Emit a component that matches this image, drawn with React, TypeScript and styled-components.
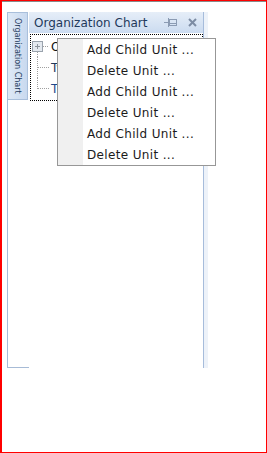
import React from 'react';
import styled, {createGlobalStyle} from 'styled-components';

const GlobalStyle = createGlobalStyle`
  html, body {
    margin: 0;
    padding: 0;
    background: #fff;
  }
  body {
    font-family: "DejaVu Sans", "Liberation Sans", sans-serif;
  }
`;

const Frame = styled.div`
  position: relative;
  width: 267px;
  height: 453px;
  box-sizing: border-box;
  border: 1px solid #ff0000;
  border-left-width: 2px;
  box-shadow: inset 0 1px 0 #8a8a8a;
  padding: 11px 0 0 5px;
`;

const Dock = styled.div`
  display: flex;
  height: 356px;
`;

const Strip = styled.div`
  width: 21px;
  border-left: 1px solid #a7bbd6;
  border-bottom: 1px solid #a7bbd6;
`;

const Tab = styled.div`
  box-sizing: border-box;
  width: 21px;
  margin-left: -1px;
  height: 88px;
  border: 1px solid #a9bfdb;
  background: linear-gradient(to right, #dfe9f6, #c8d9ef);
  display: flex;
  justify-content: center;
  padding-top: 5px;
`;

const TabText = styled.span`
  writing-mode: vertical-rl;
  font-size: 8px;
  color: #1e395b;
  white-space: nowrap;
`;

const Panel = styled.div`
  width: 174px;
  display: flex;
  flex-direction: column;
  border-right: 1px solid #a6bcdb;
  box-shadow: 4px 0 0 #edf2f9;
`;

const Header = styled.div`
  height: 21px;
  display: flex;
  align-items: center;
  padding: 0 6px 0 5px;
  background: linear-gradient(to bottom, #e6eef8, #cbdbf0);
  font-size: 12px;
  color: #1e395b;
`;

const Title = styled.span`
  flex: 1;
  white-space: nowrap;
`;

const HeaderButton = styled.span<{gap: number}>`
  display: flex;
  align-items: center;
  margin-left: ${p => p.gap}px;
`;

const FocusBox = styled.div`
  margin: 1px 0 0 1px;
  height: 64px;
  border: 1px dotted #000;
  padding-top: 1px;
`;

const Node = styled.div`
  display: flex;
  align-items: center;
  height: 21px;
  padding-left: 1px;
`;

const NodeText = styled.span<{color: string}>`
  font-size: 12px;
  color: ${p => p.color};
`;

const Menu = styled.div`
  position: absolute;
  left: 55px;
  top: 37px;
  width: 157px;
  border: 1px solid #979797;
  background: linear-gradient(to right, #f0f0f0 25px, #fff 25px);
`;

const MenuItem = styled.div`
  height: 21px;
  display: flex;
  align-items: center;
  padding-left: 29px;
  font-size: 12px;
  letter-spacing: 0.35px;
  color: #1b1b1b;
  white-space: nowrap;
`;

const Connector = ({kind}: {kind: 'root' | 'mid' | 'last'}) => (
  <svg width="19" height="21" viewBox="0 0 19 21">
    {kind === 'root' ? (
      <>
        <line x1="11" y1="10.5" x2="17" y2="10.5" stroke="#a0a0a0" strokeDasharray="1 1"/>
        <line x1="5.5" y1="16" x2="5.5" y2="21" stroke="#a0a0a0" strokeDasharray="1 1"/>
        <rect x="0.5" y="5.5" width="10" height="10" fill="#e4e9ef" stroke="#9aa3ad"/>
        <line x1="3" y1="10.5" x2="8" y2="10.5" stroke="#8d949c"/>
        <line x1="5.5" y1="8" x2="5.5" y2="13" stroke="#8d949c"/>
      </>
    ) : (
      <>
        <line x1="5.5" y1="0" x2="5.5" y2={kind === 'mid' ? 21 : 11} stroke="#a0a0a0" strokeDasharray="1 1"/>
        <line x1="6" y1="10.5" x2="17" y2="10.5" stroke="#a0a0a0" strokeDasharray="1 1"/>
      </>
    )}
  </svg>
);

const PinIcon = () => (
  <svg width="13" height="9" viewBox="0 0 13 9">
    <g stroke="#8b9bb3" fill="none">
      <line x1="0" y1="4.5" x2="4" y2="4.5"/>
      <line x1="4.5" y1="0" x2="4.5" y2="9"/>
      <rect x="5.5" y="1.5" width="7" height="6"/>
      <line x1="5.5" y1="5.5" x2="12.5" y2="5.5"/>
    </g>
  </svg>
);

const CloseIcon = () => (
  <svg width="9" height="9" viewBox="0 0 9 9">
    <g stroke="#7d8ca3" strokeWidth="2">
      <line x1="1" y1="1" x2="8" y2="8"/>
      <line x1="8" y1="1" x2="1" y2="8"/>
    </g>
  </svg>
);

const menuItems = ['Add Child Unit ...', 'Delete Unit ...', 'Add Child Unit ...', 'Delete Unit ...', 'Add Child Unit ...', 'Delete Unit ...'];

function App() {
  return (
    <Frame>
      <GlobalStyle/>
      <Dock>
        <Strip>
          <Tab><TabText>Organization Chart</TabText></Tab>
        </Strip>
        <Panel>
          <Header>
            <Title>Organization Chart</Title>
            <HeaderButton gap={0}><PinIcon/></HeaderButton>
            <HeaderButton gap={11}><CloseIcon/></HeaderButton>
          </Header>
          <FocusBox>
            <Node><Connector kind="root"/><NodeText color="#111">Organization</NodeText></Node>
            <Node><Connector kind="mid"/><NodeText color="#1e395b">Two</NodeText></Node>
            <Node><Connector kind="last"/><NodeText color="#1e4a8b">Three</NodeText></Node>
          </FocusBox>
        </Panel>
      </Dock>
      <Menu>
        {menuItems.map((t, i) => <MenuItem key={i}>{t}</MenuItem>)}
      </Menu>
    </Frame>
  );
}

export default App;
